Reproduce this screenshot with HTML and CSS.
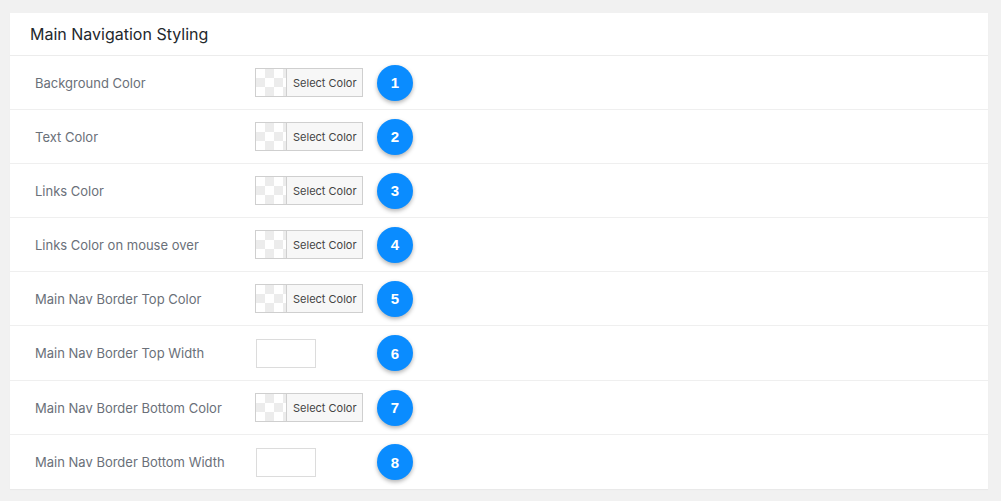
FILE: index.html
```html
<!DOCTYPE html>
<html lang="en">
<head>
  <meta charset="UTF-8">
  <title>Main Navigation Styling</title>
  <link rel="stylesheet" href="styles.css">
</head>
<body>
  <div class="panel">
    <div class="panel-head">Main Navigation Styling</div>

    <div class="row">
      <div class="label">Background Color</div>
      <div class="field"><button class="picker"><span class="swatch"></span><span class="picker-text">Select Color</span></button></div>
      <div class="badge">1</div>
    </div>
    <div class="row">
      <div class="label">Text Color</div>
      <div class="field"><button class="picker"><span class="swatch"></span><span class="picker-text">Select Color</span></button></div>
      <div class="badge">2</div>
    </div>
    <div class="row">
      <div class="label">Links Color</div>
      <div class="field"><button class="picker"><span class="swatch"></span><span class="picker-text">Select Color</span></button></div>
      <div class="badge">3</div>
    </div>
    <div class="row">
      <div class="label">Links Color on mouse over</div>
      <div class="field"><button class="picker"><span class="swatch"></span><span class="picker-text">Select Color</span></button></div>
      <div class="badge">4</div>
    </div>
    <div class="row">
      <div class="label">Main Nav Border Top Color</div>
      <div class="field"><button class="picker"><span class="swatch"></span><span class="picker-text">Select Color</span></button></div>
      <div class="badge">5</div>
    </div>
    <div class="row tall">
      <div class="label">Main Nav Border Top Width</div>
      <div class="field"><input class="num" type="text"></div>
      <div class="badge">6</div>
    </div>
    <div class="row">
      <div class="label">Main Nav Border Bottom Color</div>
      <div class="field"><button class="picker"><span class="swatch"></span><span class="picker-text">Select Color</span></button></div>
      <div class="badge">7</div>
    </div>
    <div class="row last">
      <div class="label">Main Nav Border Bottom Width</div>
      <div class="field"><input class="num" type="text"></div>
      <div class="badge">8</div>
    </div>
  </div>
</body>
</html>
```

FILE: styles.css
```css
body {
  margin: 0;
  padding: 13px 13px 12px 10px;
  background: #f1f1f1;
  font-family: Inter, "Liberation Sans", sans-serif;
}
.panel {
  background: #fff;
  box-shadow: 0 1px 1px rgba(0,0,0,0.03);
}
.panel-head {
  height: 43px;
  box-sizing: border-box;
  padding: 0 20px 1px;
  display: flex;
  align-items: center;
  font-size: 16px;
  color: #23282d;
  border-bottom: 1px solid #ececec;
}
.row {
  display: flex;
  align-items: center;
  height: 54px;
  box-sizing: border-box;
  border-bottom: 1px solid #efefef;
}
.row.tall {
  height: 55px;
}
.row.last {
  border-bottom: none;
}
.label {
  width: 220px;
  padding-left: 25px;
  font-size: 13px;
  color: #6a7079;
}
.field {
  width: 122px;
  display: flex;
}
.picker {
  display: flex;
  align-items: stretch;
  height: 29px;
  padding: 0;
  border: 1px solid #cfcfcf;
  background: #f7f7f7;
  font-family: inherit;
  cursor: pointer;
}
.swatch {
  width: 30px;
  border-right: 1px solid #cfcfcf;
  background-color: #fff;
  background-image:
    linear-gradient(45deg, #ececec 25%, transparent 25%, transparent 75%, #ececec 75%),
    linear-gradient(45deg, #ececec 25%, transparent 25%, transparent 75%, #ececec 75%);
  background-size: 18px 18px;
  background-position: 0 0, 9px 9px;
}
.picker-text {
  display: flex;
  align-items: center;
  padding: 0 5px 0 6px;
  font-size: 11px;
  color: #444;
}
.num {
  width: 60px;
  height: 29px;
  box-sizing: border-box;
  margin-left: 1px;
  border: 1px solid #dcdcdc;
  background: #fff;
}
.badge {
  width: 36px;
  height: 36px;
  border-radius: 50%;
  background: #0a8cff;
  color: #fff;
  font-family: "Liberation Sans", Arial, sans-serif;
  font-weight: bold;
  font-size: 15px;
  display: flex;
  align-items: center;
  justify-content: center;
  box-shadow: 0 2px 4px rgba(0,0,0,0.3);
}
```
